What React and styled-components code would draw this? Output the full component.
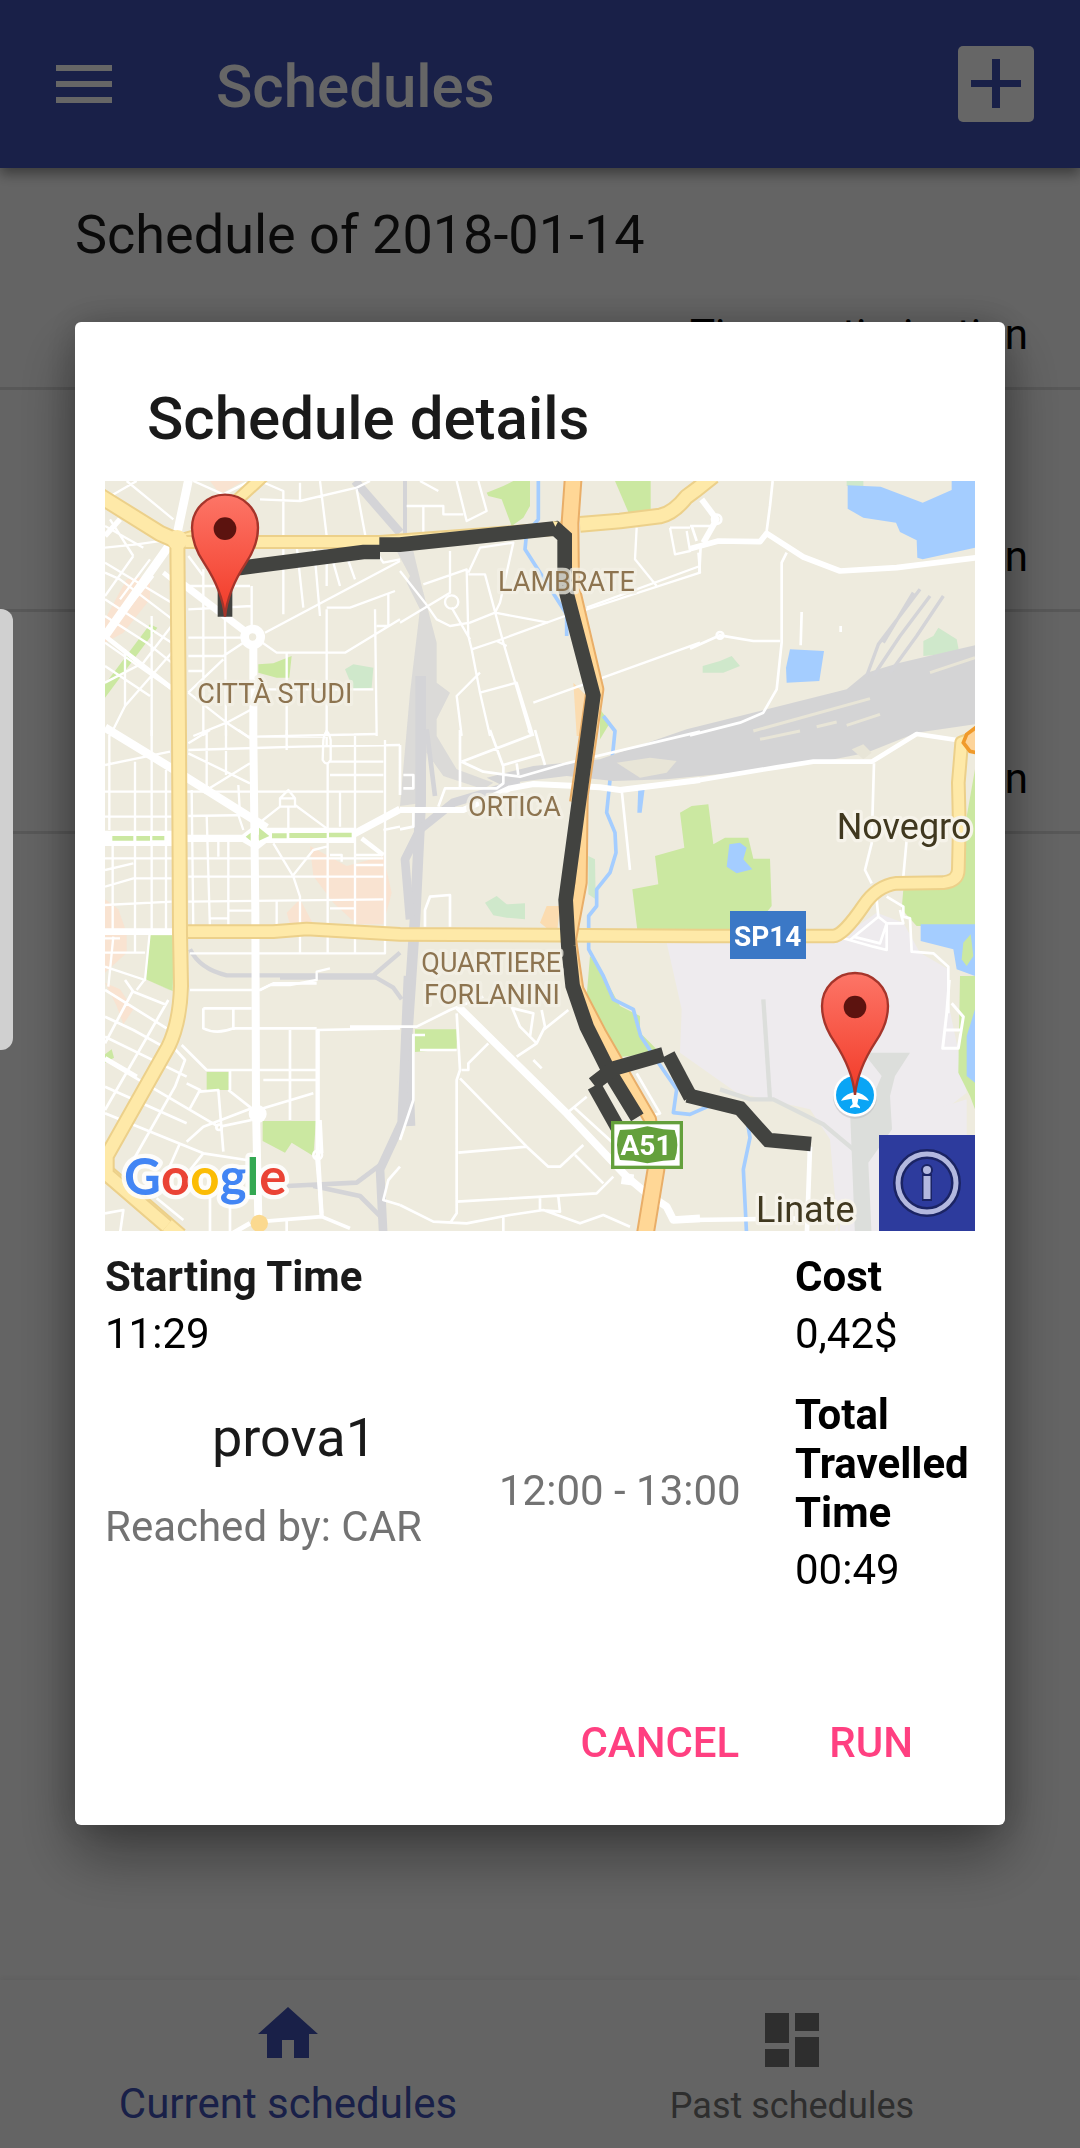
import React from "react";
import styled, { createGlobalStyle } from "styled-components";

const GlobalStyle = createGlobalStyle`
  *, *::before, *::after { box-sizing: border-box; }
  body {
    margin: 0;
    background: #fafafa;
    font-family: Roboto, "Noto Sans", sans-serif;
    color: #000;
  }
  h1, h2, h3, p, dl, dt, dd, ul { margin: 0; padding: 0; font-weight: 400; }
  button { font-family: inherit; border: 0; background: none; padding: 0; cursor: pointer; }
`;

const Screen = styled.div`
  min-height: 100vh;
  display: flex;
  flex-direction: column;
`;

const Toolbar = styled.header`
  display: flex;
  align-items: center;
  gap: 104px;
  height: 168px;
  padding: 0 46px 0 56px;
  background: #3f51b5;
  box-shadow: 0 6px 12px rgba(0, 0, 0, 0.4);
`;

const ToolbarTitle = styled.h1`
  flex: 1;
  font-size: 60px;
  line-height: 70px;
  font-weight: 500;
  color: #fff;
  padding-top: 6px;
`;

const IconButton = styled.button`
  display: flex;
  color: #fff;
`;

const ScheduleList = styled.ul`
  flex: 1;
  list-style: none;
`;

const ScheduleRow = styled.li`
  display: flex;
  flex-direction: column;
  justify-content: flex-end;
  height: 222px;
  padding: 0 52px 28px 75px;
  border-bottom: 3px solid #dcdcdc;
`;

const RowTitle = styled.h2`
  font-size: 54px;
  line-height: 63px;
  color: #1a1a1a;
  margin-bottom: 44px;
`;

const RowNote = styled.p`
  font-size: 42px;
  line-height: 49px;
  text-align: right;
`;

const BottomNav = styled.nav`
  display: flex;
  height: 168px;
  padding: 0 36px;
  background: #fafafa;
  box-shadow: 0 -2px 6px rgba(0, 0, 0, 0.06);
`;

const NavItem = styled.a`
  flex: 1;
  display: flex;
  flex-direction: column;
  align-items: center;
  justify-content: flex-end;
  gap: ${(p) => (p.$active ? "9px" : "8px")};
  padding-bottom: 20px;
  font-size: ${(p) => (p.$active ? "42px" : "36px")};
  line-height: ${(p) => (p.$active ? "49px" : "44px")};
  color: ${(p) => (p.$active ? "#3f51b5" : "#737373")};
  text-decoration: none;
`;

const Scrim = styled.div`
  position: fixed;
  inset: 0;
  display: flex;
  align-items: center;
  justify-content: center;
  padding: 0 75px 2px;
  background: rgba(0, 0, 0, 0.6);
`;

const EdgeHandle = styled.div`
  position: fixed;
  left: 0;
  top: 609px;
  width: 13px;
  height: 441px;
  border-radius: 0 12px 12px 0;
  background: #d0d0d0;
`;

const Dialog = styled.section`
  flex: 1;
  padding: 62px 30px 28px;
  border-radius: 6px;
  background: #fff;
  box-shadow: 0 30px 60px rgba(0, 0, 0, 0.4), 0 0 36px rgba(0, 0, 0, 0.2);
`;

const DialogTitle = styled.h2`
  padding: 0 42px;
  margin-bottom: 27px;
  font-size: 60px;
  line-height: 70px;
  font-weight: 500;
  color: #1a1a1a;
`;

const MapFrame = styled.div`
  position: relative;
  overflow: hidden;
`;

const MapSvg = styled.svg`
  display: block;
  width: 100%;
  height: auto;
`;

const InfoButton = styled.button`
  position: absolute;
  right: 0;
  bottom: 0;
  display: flex;
  align-items: center;
  justify-content: center;
  width: 96px;
  height: 96px;
  background: #2d3b9d;
`;

const Details = styled.div`
  display: grid;
  grid-template-columns: minmax(0, 1fr) 180px;
  padding-top: 21px;
`;

const Facts = styled.dl`
  display: flex;
  flex-direction: column;
  gap: 32px;
`;

const Fact = styled.div`
  display: flex;
  flex-direction: column;
  gap: 8px;
  font-size: 42px;
  line-height: 49px;
`;

const FactName = styled.dt`
  font-weight: 700;
  color: ${(p) => (p.$soft ? "#1a1a1a" : "#000")};
`;

const FactValue = styled.dd``;

const Stop = styled.article`
  display: flex;
  gap: 16px;
  height: 218px;
  margin-top: 24px;
`;

const StopInfo = styled.div`
  flex: 0 1 378px;
  display: flex;
  flex-direction: column;
  gap: 33px;
  padding-top: 24px;
`;

const StopName = styled.h3`
  font-size: 54px;
  line-height: 63px;
  text-align: center;
  color: #1a1a1a;
`;

const StopText = styled.p`
  align-self: ${(p) => (p.$middle ? "center" : "flex-start")};
  font-size: 42px;
  line-height: 49px;
  color: #737373;
  white-space: nowrap;
`;

const Actions = styled.div`
  display: flex;
  justify-content: flex-end;
  gap: 42px;
  padding: 89px 38px 0 0;
`;

const ActionButton = styled.button`
  height: 108px;
  padding: 0 24px;
  font-size: 42px;
  line-height: 49px;
  font-weight: 500;
  color: #ff4081;
`;

const AreaLabel = styled.text`
  font-size: 81px;
  fill: #8d7450;
  stroke: #f3f0e6;
  stroke-opacity: 0.75;
  stroke-width: 20px;
  stroke-linejoin: round;
  paint-order: stroke;
`;

const TownLabel = styled.text`
  font-size: 108px;
  fill: #40381f;
  stroke: #f6f3ea;
  stroke-width: 20px;
  stroke-linejoin: round;
  paint-order: stroke;
`;

const ShieldLabel = styled.text`
  font-size: 84px;
  font-weight: 700;
  fill: #fff;
  text-anchor: middle;
`;

const LogoText = styled.text`
  font-family: Lato, sans-serif;
  font-size: 153px;
  font-weight: 700;
  stroke: #fff;
  stroke-opacity: 0.85;
  stroke-width: 26px;
  stroke-linejoin: round;
  paint-order: stroke;
`;

const MenuIcon = () => (
  <svg width="56" height="38" viewBox="0 0 56 38" fill="currentColor" aria-hidden="true">
    <path d="M0 0h56v6H0zM0 16h56v6H0zM0 32h56v6H0z" />
  </svg>
);

const AddIcon = () => (
  <svg width="76" height="76" viewBox="0 0 76 76" aria-hidden="true">
    <rect width="76" height="76" rx="5" fill="#fff" />
    <path d="M34 13h8v21h21v7H42v21h-8V41H13v-7h21z" fill="#3f51b5" />
  </svg>
);

const HomeIcon = () => (
  <svg width="72" height="72" viewBox="0 0 24 24" fill="currentColor" aria-hidden="true">
    <path d="M10 20v-6h4v6h5v-8h3L12 3 2 12h3v8z" />
  </svg>
);

const DashboardIcon = () => (
  <svg width="72" height="72" viewBox="0 0 24 24" fill="currentColor" aria-hidden="true">
    <path d="M3 13h8V3H3v10zm0 8h8v-6H3v6zm10 0h8V11h-8v10zm0-18v6h8V3h-8z" />
  </svg>
);

const InfoIcon = () => (
  <svg width="72" height="72" viewBox="0 0 72 72" aria-hidden="true">
    <circle cx="36" cy="36" r="29" fill="none" stroke="#1b2464" strokeWidth="10" />
    <circle cx="36" cy="36" r="29" fill="none" stroke="#b3b8df" strokeWidth="5" />
    <g stroke="#1b2464" strokeWidth="4">
      <circle cx="36" cy="23" r="4" />
      <path d="M33 29h6v23h-6z" />
    </g>
    <g fill="#b3b8df">
      <circle cx="36" cy="23" r="4" />
      <path d="M32.500 29h7v23h-7z" />
    </g>
  </svg>
);

const Pin = ({ x, y }) => (
  <g transform={`translate(${x} ${y})`}>
    <path
      d="M0 0C-6-60-28-108-62-160C-88-198-99-228-99-267A99 99 0 0 1 99-267C99-228 88-198 62-160C28-108 6-60 0 0Z"
      fill="url(#pinFill)"
      stroke="#a5352b"
      strokeWidth="7"
    />
    <circle cx="0" cy="-264" r="34" fill="#5c130f" />
  </g>
);

const Road = ({ d, width, fill, casing }) => (
  <g fill="none" strokeLinejoin="round">
    <path d={d} stroke={casing} strokeWidth={width + 12} />
    <path d={d} stroke={fill} strokeWidth={width} />
  </g>
);

const YELLOW = { fill: "#fee9a8", casing: "#ecd08a" };
const ORANGE = { fill: "#ffd796", casing: "#e9ae68" };

const RouteMap = () => (
  <MapSvg viewBox="15 15 2610 2250" role="img" aria-label="Route map">
    <defs>
      <linearGradient id="pinFill" x1="0" y1="0" x2="0" y2="1">
        <stop offset="0" stopColor="#fd7567" />
        <stop offset="1" stopColor="#f23a27" />
      </linearGradient>
    </defs>
    <rect x="0" y="0" width="2640" height="2280" fill="#eeebde" />

    {/* built-up areas */}
    <g fill="#f9e3d1">
      <path d="M80 310L150 300L150 370L70 470L15 500V430Z" />
      <path d="M330 15H430L360 55Z" />
      <path d="M15 1270L55 1300L80 1370V1430L15 1490Z" />
      <path d="M15 1520L60 1540L100 1600L70 1645L50 1590Z" />
      <path d="M630 1110L740 1170L850 1140L875 1250L850 1345H770L700 1280L640 1200Z" />
      <path d="M560 1310L600 1270L640 1345H570Z" />
      <path d="M1420 620L1480 680L1460 780H1430Z" fill="#fbdcb0" />
      <path d="M1320 1340L1340 1290L1380 1290L1370 1380Z" fill="#fbdcb0" />
    </g>

    {/* airport ground */}
    <path d="M1700 1400H2200L2330 1310L2410 1340L2460 1430L2545 1480V1580L2600 1850L2460 1960L2300 2000L2200 2280H2215L2190 1990L2130 1900L1910 1850L1740 1730L1745 1600Z" fill="#eeebee" />
    <path d="M2220 1990L2600 1870V2280H2220Z" fill="#eeebee" />
    <g fill="#dcdedb">
      <path d="M2290 1730H2430L2385 1800L2370 1860L2376 1960L2305 2060L2315 2280H2265L2250 1900L2310 1880L2345 1800Z" />
    </g>
    <g fill="none" stroke="#dcdedb" strokeWidth="13">
      <path d="M1990 1570L2010 1870" />
      <path d="M1860 1840L1950 1870L2020 1870L2170 1945L2260 2020" />
    </g>

    {/* parks */}
    <g fill="#cbe8a1">
      <path d="M150 445L172 455L15 665V625Z" />
      <path d="M475 565L520 562L575 540L568 605L530 605L475 590Z" />
      <path d="M1160 50L1210 30L1240 15H1290V90L1270 125L1235 150L1205 70L1165 60Z" />
      <path d="M1545 15H1652V110L1590 120Z" />
      <path d="M150 1378H222L218 1545L137 1510Z" />
      <path d="M137 1510L215 1545L205 1540Z" />
      <path d="M320 1788H386V1842H320Z" />
      <path d="M488 1935H648L640 2040L575 2000L555 2030L488 1995Z" />
      <path d="M945 1660H1070V1718L945 1728Z" />
      <path d="M15 1735L35 1720L42 1745L15 1760Z" />
      <path d="M1740 1010L1775 990L1825 985L1840 1105L1875 1085L1945 1085L1960 1148H2010L2015 1290L1960 1360L1612 1362L1597 1240L1675 1225L1665 1140L1753 1115Z" />
      <path d="M1470 1440L1500 1480L1560 1590L1620 1620V1670L1640 1690L1680 1730L1540 1745L1460 1560Z" />
      <path d="M2410 1240L2560 1225L2595 1050L2625 880V1350H2450L2405 1300Z" />
      <path d="M2580 1500H2625V1900L2610 1860L2575 1790Z" />
      <path d="M1500 700L1530 740L1500 790Z" />
    </g>
    <g fill="#cfe8cb">
      <path d="M735 580L760 565L820 575L815 635L760 640Z" />
      <path d="M1155 1280L1190 1260L1220 1285L1275 1282V1330L1220 1325L1180 1318Z" />
      <path d="M1808 590V570L1860 555L1895 540L1920 570L1870 590Z" />
      <path d="M2470 540V495L2500 480L2515 455L2570 490L2578 530Z" />
      <path d="M1465 1140L1485 1150L1487 1270L1465 1255Z" />
      <path d="M2240 15H2290V30H2240Z" />
    </g>

    {/* water */}
    <g fill="#a4cdff">
      <path d="M2243 28L2342 32L2468 80L2555 42V15H2625V215L2468 250L2452 245L2450 193L2400 168L2388 140L2290 125L2243 98Z" />
      <path d="M2070 520L2172 525L2158 615L2060 620L2058 575Z" />
      <path d="M1888 1105L1920 1100L1940 1115L1930 1150L1957 1180L1910 1192L1880 1172Z" />
      <path d="M2462 1345H2625V1500L2570 1480L2560 1420L2462 1395Z" />
      <path d="M2600 1680L2625 1600V1820L2600 1800Z" />
      <path d="M1615 930H1635L1625 1010H1612Z" />
    </g>
    <path d="M2590 1400L2612 1375L2620 1440L2600 1470L2585 1450Z" fill="#cbe8a1" />
    <g fill="none" stroke="#a4cdff" strokeWidth="11" strokeLinejoin="round">
      <path d="M1315 15V130L1280 170L1275 220L1400 415L1400 480" />
      <path d="M1510 720L1545 765L1520 1010L1545 1070L1548 1130L1530 1190L1490 1240V1290L1466 1320V1420L1510 1500L1540 1570L1600 1600L1622 1680L1675 1760L1730 1840L1720 1910L1770 1915L1850 1880L1940 1925L1950 1985L1930 2080L1940 2280" />
    </g>

    {/* railways */}
    <g fill="#d4d4d5">
      <path d="M1500 850L1760 760L2240 640L2300 590L2400 560L2625 508V745L2450 770L2300 830L2150 860L1900 890L1700 910L1540 915L1400 900L1200 925L1160 905L1300 870Z" />
      <path d="M900 990L930 650L960 400L920 320L930 300L890 225L940 225L965 330L1010 500L1010 620L1050 650L1010 730V780L1070 880L1180 920L1150 940L1030 900L980 830L970 980Z" opacity=".75" />
    </g>
    <g fill="none" stroke="#d4d4d7" strokeLinejoin="round">
      <path d="M765 15L900 170" strokeWidth="26" />
      <path d="M915 15V190" strokeWidth="12" />
      <path d="M962 600V980L945 1330L920 1700L930 1950" strokeWidth="32" />
      <path d="M1260 920L1060 980L960 1060L915 1150L930 1330" strokeWidth="26" />
      <path d="M980 760L1005 960" strokeWidth="14" />
      <path d="M924 1500L905 1940L840 2080L850 2280" strokeWidth="26" />
      <path d="M560 2130L770 2120L850 2060M640 2130L780 2160L850 2230" strokeWidth="14" />
      <path d="M270 1420Q300 1480 380 1498H820L900 1430M820 1500L880 1535L905 1570" strokeWidth="13" />
      <path d="M540 1503H830" strokeWidth="16" />
      <path d="M2300 600L2335 505L2460 340M2320 600L2400 480L2490 360M2370 590L2450 480L2530 360M2350 500L2440 350" strokeWidth="10" />
    </g>
    <g fill="none" stroke="#e8e5d7" strokeWidth="9">
      <path d="M1960 765L2310 668M2150 752L2210 738M2240 748L2340 715M2490 590L2625 545M1980 790L2100 765" />
    </g>
    <path d="M1550 860L1650 845L1730 855L1700 890L1620 905Z" fill="#e8e5d7" />
    <path d="M2255 820L2290 805L2315 830L2290 850Z" fill="#e8e5d7" />

    {/* minor streets, north-west */}
    <g fill="none" stroke="#fff" strokeWidth="7" strokeLinejoin="round">
      <path d="M15 70L110 15M15 150L130 215M80 15L220 130M15 215L110 205L215 190M15 290L60 310L230 440M15 260L215 380M15 370L215 500M15 420L140 500L215 560M15 500L215 640M15 570L150 660M15 620L130 560L230 430M30 780L75 690V520M155 780V420M60 370L150 250M50 440L160 300M15 360L100 240M75 690L215 530M100 240L30 130" />
      <path d="M280 15L370 55L440 20M480 15L550 45V180M600 20V75L480 70M600 75L770 35L810 15M660 15L680 180M770 40L800 200M640 190L660 420M550 220V415M590 210L610 395M680 210V330M700 260L720 330M740 240L765 310M820 215L850 260L900 250" />
      <path d="M455 330V470M265 485H430M265 540H370L430 500M265 585H310M370 550L265 650M375 430L378 780M310 280V780M265 330H450M265 400L455 390M265 240L310 300M495 470L900 255M480 495L530 530H735L900 430M560 530V780M680 400V780M825 400L830 780M680 395H750L885 345M865 350V450L830 450M480 640H820M265 650L380 740L455 700M280 780L380 740L455 790" />
    </g>
    {/* minor streets, north */}
    <g transform="translate(900 0)" fill="none" stroke="#fff" strokeWidth="7" strokeLinejoin="round">
      <path d="M60 15L115 45M170 15L200 135L260 105L235 15M20 90H130V115H190M70 90V170M150 225V350L0 440M70 325L200 280L205 480L215 520L240 650L270 780M205 290L240 215L340 200L300 380L285 410L210 440L150 450L110 430L75 380L0 285M205 295H255L310 500L390 770M285 410L445 440M215 520L290 495L495 420M290 495L320 510M155 395L210 490M400 680L900 500M240 650L350 620L400 780M240 590L170 660L185 780M500 420L900 290L895 230" />
      <circle cx="155" cy="378" r="20" />
      <path d="M710 155L705 250L770 330M810 155H870M810 155L825 235L870 225L860 165M560 395L900 270" />
    </g>
    {/* minor streets, north-east */}
    <g transform="translate(1770 0)" fill="none" stroke="#fff" strokeWidth="8" strokeLinejoin="round">
      <path d="M248 15L240 90L230 165M290 230L275 260V500L260 640L220 710L150 740L0 778M0 518L90 478L190 495H270M335 408L332 508M452 450V468M0 150H60M20 195L5 150M32 210L28 290" />
      <path d="M35 70L80 130L40 200" strokeWidth="18" />
      <path d="M0 218L85 195L210 197L230 172L340 243L450 285L620 275L860 245" strokeWidth="17" />
      <circle cx="80" cy="130" r="14" />
      <circle cx="90" cy="478" r="10" />
    </g>
    {/* minor streets, west */}
    <g transform="translate(0 762)" fill="none" stroke="#fff" strokeWidth="7" strokeLinejoin="round">
      <path d="M28 15V300M105 95V600M155 0V600M198 120V600M15 105L210 65M15 185H850M15 260H215M265 258L455 255M15 420L100 400M15 470L100 445H215M15 385H850M15 525L215 515M265 515L850 508M38 340V600M105 600V665M15 668H135M40 620L25 770M60 625H15M15 710L135 750L150 600M110 780L137 745" />
      <path d="M265 60L600 50L900 45M265 40L330 0M265 70L450 160M320 180L450 100M320 0V180M378 0V135M415 0L445 20H680M445 20L830 12M560 0V60M680 0V50M320 255L330 600M275 180L280 600M355 330V380M385 320V600M265 440H850M385 542H460M330 565H385M530 510V590M470 285L540 230V205H585V230H540M565 230V320M585 225L680 295M540 205L565 180L585 205M520 340L580 440L600 500V670M580 435L640 360L680 350M690 375H725V395M765 375H850M765 405H850M690 135H850M690 95H850M855 30V670H270M683 100V670M765 10V670M720 185V290M850 300L900 290M690 535H765M415 255L430 300M415 165L420 255" />
      <path d="M670 30Q680 -20 692 30V90Q680 110 668 90Z" />
      <path d="M480 780L510 765H570L650 750V725L690 715" />
      <circle cx="320" cy="180" r="9" fill="#fff" />
      <path d="M785 325L850 375" strokeWidth="14" />
    </g>
    {/* minor streets, centre */}
    <g transform="translate(900 762)" fill="none" stroke="#fff" strokeWidth="8" strokeLinejoin="round">
      <path d="M0 45V195M10 135H40V175H10M180 0V175M185 95L250 125L360 140L500 100L900 5M185 95L395 15L385 0M270 0L310 110V160L290 175H135L115 230M310 105L425 72L435 105M350 100L355 135M405 0L425 72M40 240V290L0 298M665 180L690 420M75 590V540L90 500L150 495V590" />
      <path d="M0 240H190L330 175L400 162L530 168L600 172L660 180L900 150" strokeWidth="18" />
      <path d="M870 155L1130 112L1240 95H1415L1550 12L1670 30" strokeWidth="14" />
      <path d="M1422 100L1415 340L1395 420L1415 460M1520 330L1510 440M1430 510L1435 560L1460 580L1440 640L1360 620M1435 560L1350 630M1500 540L1510 580H1460V660L1420 650L1330 625M1460 500L1510 530V560L1530 565L1535 665L1600 670L1645 710V850" />
    </g>
    {/* minor streets, south-west */}
    <g transform="translate(0 1512)" fill="none" stroke="#fff" strokeWidth="8" strokeLinejoin="round">
      <path d="M15 30L200 145M15 110L100 150L190 200M15 170L260 290M205 60L15 390M100 30L15 190M75 0L100 35L200 75M15 240L355 440M15 320L260 430M15 400L310 520M200 180L255 240L225 320L100 540M245 195L320 270H650M270 385L300 330L260 310M300 335L355 330L370 515M385 330L455 385L310 440L260 485M390 270V330M360 440L455 420M490 300H650M490 385L640 340M570 150V420M310 85H455M400 85V150M310 85V145Q350 165 400 145H650M270 30H480L520 10H650M650 150L900 145M310 520L440 540M200 580L240 490M270 570L310 520M170 655L250 720M330 650V780M390 660V780M15 700L70 690L60 760M560 720V780" />
      <path d="M653 150V510L665 710" strokeWidth="13" />
      <path d="M480 725L665 710L750 745M650 525L665 700M660 420L665 520" strokeWidth="11" />
      <path d="M380 770L450 730M15 235L110 290" strokeWidth="14" />
      <circle cx="653" cy="525" r="13" />
      <circle cx="357" cy="442" r="8" />
      <path d="M900 560L865 600L850 660L900 675M750 140H900" />
    </g>
    {/* minor streets, south */}
    <g transform="translate(900 1512)" fill="none" stroke="#fff" strokeWidth="8" strokeLinejoin="round">
      <path d="M0 480L40 360V165H75M170 100L180 270L170 300L170 700L150 730M60 210H170M185 270H205V250L265 190M180 295L380 500L445 560H480L550 495M175 518L380 500M500 400L560 350M520 380L640 490M525 525L610 610M170 665L590 640L640 590M420 650V690L480 695L475 650M0 675L100 725L200 730L330 705L430 690L540 730L610 705L690 740M310 710V780M335 80L360 140L410 190L350 230M340 85L400 100L390 170M410 190L435 140L425 90M430 150L505 90M400 240L425 265M710 280L780 400L740 410M0 140H50L150 90L250 50" />
      <path d="M175 80L500 400L680 590L740 640L800 680L820 720L900 715" strokeWidth="23" />
      <path d="M665 595L700 600" strokeWidth="34" />
      <path d="M1230 500L1220 780M870 720L1230 715" strokeWidth="14" />
    </g>
    {/* service roads, south-east */}
    <g transform="translate(1770 1512)" fill="none" stroke="#fff" strokeWidth="9" strokeLinejoin="round">
      <path d="M778 0L770 100L758 205H805L820 110L785 70M765 150H815" />
    </g>

    {/* avenues */}
    <g fill="none" stroke="#fff" strokeLinejoin="round">
      <path d="M268 0L232 170M210 205L15 480" strokeWidth="26" />
      <path d="M250 325L460 485" strokeWidth="22" />
      <path d="M60 130L15 180" strokeWidth="16" />
      <path d="M15 480L220 640M190 290L215 310" strokeWidth="14" />
      <path d="M15 755L240 892L500 1055" strokeWidth="25" />
      <path d="M460 485V780L466 1300L468 1900L475 2230" strokeWidth="24" />
      <path d="M15 1087H230M255 1087H430L465 1060L510 1078H760M430 1087L470 1110L510 1078M760 1075L900 1000" strokeWidth="22" />
      <path d="M490 1078H765M15 1087H225" strokeWidth="46" />
      <path d="M15 1367H230" strokeWidth="20" />
    </g>
    <circle cx="458" cy="483" r="24" fill="#eeebde" stroke="#fff" strokeWidth="26" />
    <circle cx="473" cy="1914" r="27" fill="#fff" />
    <g fill="#cbe8a1">
      <path d="M37 1080H100V1094H37ZM109 1080H150V1094H109ZM157 1080H193V1093H157Z" />
      <path d="M437 1082L452 1070V1094ZM477 1055L508 1080L477 1094ZM516 1072H560V1087H516ZM568 1071H680V1086H568ZM687 1070H755V1084H687Z" />
    </g>

    {/* main roads */}
    <Road {...YELLOW} width={28} d="M232 195L300 175L490 0" />
    <Road {...YELLOW} width={40} d="M0 60L180 172L232 195M20 2090L240 2280" />
    <Road {...YELLOW} width={30} d="M232 198H840L1400 156" />
    <Road {...YELLOW} width={38} d="M1440 145L1560 135L1680 120Q1720 112 1760 62L1790 40L1840 0" />
    <Road {...YELLOW} width={32} d="M240 1367H520L620 1359L900 1375L1800 1380H2200Q2230 1378 2290 1290Q2330 1230 2390 1222L2530 1220Q2575 1215 2575 1180L2578 1050L2575 920L2585 800L2640 780" />
    <Road {...YELLOW} width={36} d="M232 190L237 780L240 1372L243 1530Q240 1640 205 1712L20 2040V2095L200 2250" />
    <circle cx="478" cy="2242" r="26" fill="#fbd98f" />
    <circle cx="232" cy="192" r="30" fill="#fee9a8" />
    <path d="M2640 745L2600 775L2590 800L2610 826L2640 832" fill="#fdd49a" stroke="#f09a2b" strokeWidth="11" />
    <Road {...ORANGE} width={44} d="M1420 0L1410 140L1412 330L1485 640L1462 800L1435 980" />
    <Road {...ORANGE} width={30} d="M1445 960L1442 1220L1410 1390L1432 1540L1500 1670L1650 1930L1670 2060L1640 2280" />
    <Road {...ORANGE} width={44} d="M1660 1960L1668 2080L1635 2280" />

    {/* planned route */}
    <g fill="none" stroke="#424340" strokeWidth="44">
      <path d="M375 422V282L790 228H840" />
      <path d="M838 206H900L1366 157L1394 182V330L1480 658L1397 1272L1405 1410L1418 1530L1460 1652L1525 1782L1612 1924" />
      <path d="M1480 1824L1540 1778L1690 1735" />
      <path d="M1704 1736L1772 1864" />
      <path d="M1762 1858L1920 1897L2005 1992L2133 2004" />
      <path d="M1483 1830L1556 1960" />
    </g>
    <path d="M1358 135L1366 152L1374 137Z" fill="#fee9a8" />

    {/* place names */}
    <AreaLabel x="292" y="682">CITTÀ STUDI</AreaLabel>
    <AreaLabel x="1194" y="345">LAMBRATE</AreaLabel>
    <AreaLabel x="1104" y="1020">ORTICA</AreaLabel>
    <AreaLabel x="964" y="1488">QUARTIERE</AreaLabel>
    <AreaLabel x="972" y="1584">FORLANINI</AreaLabel>
    <TownLabel x="2210" y="1090">Novegro</TownLabel>
    <TownLabel x="1968" y="2238">Linate</TownLabel>

    {/* road shields */}
    <rect x="1890" y="1305" width="228" height="144" fill="#3b78c6" />
    <ShieldLabel x="2003" y="1409">SP14</ShieldLabel>
    <rect x="1538" y="1940" width="206" height="134" fill="#fff" stroke="#64a03c" strokeWidth="10" />
    <path d="M1560 1962L1600 1960L1642 1951L1690 1960L1724 1962Q1740 2007 1724 2052L1690 2054L1642 2062L1600 2054L1560 2052Q1542 2007 1560 1962Z" fill="#64a03c" />
    <ShieldLabel x="1638" y="2036">A51</ShieldLabel>

    {/* airport badge */}
    <circle cx="2265" cy="1862" r="66" fill="#b9b9bd" opacity=".5" />
    <circle cx="2265" cy="1857" r="65" fill="#fff" />
    <circle cx="2265" cy="1857" r="57" fill="#0aa5f5" />
    <path d="M2265 1848L2277 1851Q2300 1860 2307 1874L2275 1868L2272 1884L2280 1893V1897L2265 1893L2250 1897V1893L2258 1884L2255 1868L2223 1874Q2230 1860 2253 1851Z" fill="#fff" />

    <Pin x={375} y={422} />
    <Pin x={2265} y={1857} />

    <LogoText x="72" y="2158">
      <tspan fill="#4285f4">G</tspan>
      <tspan fill="#ea4335">o</tspan>
      <tspan fill="#fbbc05">o</tspan>
      <tspan fill="#4285f4">g</tspan>
      <tspan fill="#34a853">l</tspan>
      <tspan fill="#ea4335">e</tspan>
    </LogoText>
  </MapSvg>
);

const schedules = [
  { id: 1, title: "Schedule of 2018-01-14", note: "Time optimization" },
  { id: 2, note: "Time optimization" },
  { id: 3, note: "Time optimization" },
];

export default function App() {
  return (
    <>
      <GlobalStyle />
      <Screen>
        <Toolbar>
          <IconButton type="button" aria-label="Menu">
            <MenuIcon />
          </IconButton>
          <ToolbarTitle>Schedules</ToolbarTitle>
          <IconButton type="button" aria-label="Add schedule">
            <AddIcon />
          </IconButton>
        </Toolbar>
        <ScheduleList>
          {schedules.map((s) => (
            <ScheduleRow key={s.id}>
              {s.title && <RowTitle>{s.title}</RowTitle>}
              <RowNote>{s.note}</RowNote>
            </ScheduleRow>
          ))}
        </ScheduleList>
        <BottomNav>
          <NavItem href="#current" $active>
            <HomeIcon />
            Current schedules
          </NavItem>
          <NavItem href="#past">
            <DashboardIcon />
            Past schedules
          </NavItem>
        </BottomNav>
      </Screen>

      <Scrim>
        <Dialog role="dialog" aria-modal="true" aria-labelledby="dialog-title">
          <DialogTitle id="dialog-title">Schedule details</DialogTitle>
          <MapFrame>
            <RouteMap />
            <InfoButton type="button" aria-label="Map information">
              <InfoIcon />
            </InfoButton>
          </MapFrame>
          <Details>
            <div>
              <dl>
                <Fact>
                  <FactName $soft>Starting Time</FactName>
                  <FactValue>11:29</FactValue>
                </Fact>
              </dl>
              <Stop>
                <StopInfo>
                  <StopName>prova1</StopName>
                  <StopText>Reached by: CAR</StopText>
                </StopInfo>
                <StopText $middle>12:00 - 13:00</StopText>
              </Stop>
            </div>
            <Facts>
              <Fact>
                <FactName>Cost</FactName>
                <FactValue>0,42$</FactValue>
              </Fact>
              <Fact>
                <FactName>Total Travelled Time</FactName>
                <FactValue>00:49</FactValue>
              </Fact>
            </Facts>
          </Details>
          <Actions>
            <ActionButton type="button">CANCEL</ActionButton>
            <ActionButton type="button">RUN</ActionButton>
          </Actions>
        </Dialog>
      </Scrim>
      <EdgeHandle />
    </>
  );
}
